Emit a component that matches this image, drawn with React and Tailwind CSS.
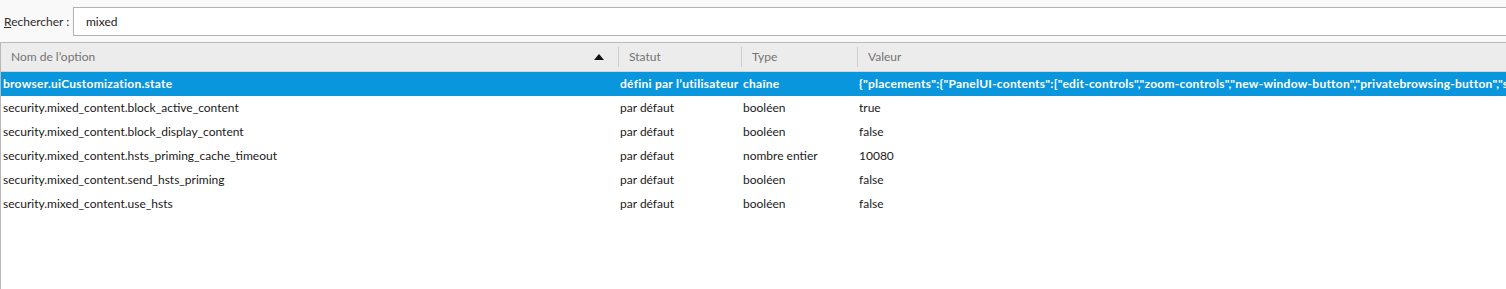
import React from "react";

const rows = [
  { name: "browser.uiCustomization.state", status: "défini par l’utilisateur", type: "chaîne", value: "{\"placements\":{\"PanelUI-contents\":[\"edit-controls\",\"zoom-controls\",\"new-window-button\",\"privatebrowsing-button\",\"save-page-button\",\"print-button\"]}}", selected: true },
  { name: "security.mixed_content.block_active_content", status: "par défaut", type: "booléen", value: "true" },
  { name: "security.mixed_content.block_display_content", status: "par défaut", type: "booléen", value: "false" },
  { name: "security.mixed_content.hsts_priming_cache_timeout", status: "par défaut", type: "nombre entier", value: "10080" },
  { name: "security.mixed_content.send_hsts_priming", status: "par défaut", type: "booléen", value: "false" },
  { name: "security.mixed_content.use_hsts", status: "par défaut", type: "booléen", value: "false" },
];

export default function App() {
  return (
    <div className="w-[1506px] h-[289px] overflow-hidden bg-[#f9f9fa] text-[12px] text-[#1a1a1a] flex flex-col" style={{ fontFamily: 'Lato, "Noto Sans", sans-serif' }}>
      {/* Search */}
      <div className="flex items-center h-[42px] pt-[1px]">
        <label className="pl-[4px] w-[73px] shrink-0 whitespace-nowrap text-[#2b2b2b]">
          <span className="underline">R</span>echercher :
        </label>
        <div className="flex-1 h-[29px] -mr-[10px] bg-white border border-[#b1b1b3] flex items-center pl-[12px]">
          mixed
        </div>
      </div>

      {/* Tree */}
      <div className="flex-1 bg-white border-t border-l border-[#b9b9b9] flex flex-col">
        <div className="h-[29px] bg-[#ececec] border-b border-[#d4d4d4] flex items-center text-[#737373] whitespace-nowrap">
          <div className="w-[617px] shrink-0 pl-[10px] flex items-center justify-between pr-[14px]">
            <span>Nom de l’option</span>
            <svg width="10" height="6" viewBox="0 0 10 6"><path d="M5 0 L10 6 L0 6 Z" fill="#111" /></svg>
          </div>
          <div className="w-[123px] shrink-0 border-l border-[#cfcfcf] h-[20px] flex items-center pl-[10px]">Statut</div>
          <div className="w-[116px] shrink-0 border-l border-[#cfcfcf] h-[20px] flex items-center pl-[10px]">Type</div>
          <div className="flex-1 border-l border-[#cfcfcf] h-[20px] flex items-center pl-[10px]">Valeur</div>
        </div>
        {rows.map((r) => (
          <div
            key={r.name}
            className={`h-[24px] flex items-center whitespace-nowrap overflow-hidden ${r.selected ? "bg-[#0996dc] text-white font-bold tracking-[0.25px]" : ""}`}
          >
            <div className="w-[619px] shrink-0 pl-[2px]">{r.name}</div>
            <div className="w-[123px] shrink-0 overflow-hidden">{r.status}</div>
            <div className="w-[116px] shrink-0">{r.type}</div>
            <div className="flex-1">{r.value}</div>
          </div>
        ))}
      </div>
    </div>
  );
}
